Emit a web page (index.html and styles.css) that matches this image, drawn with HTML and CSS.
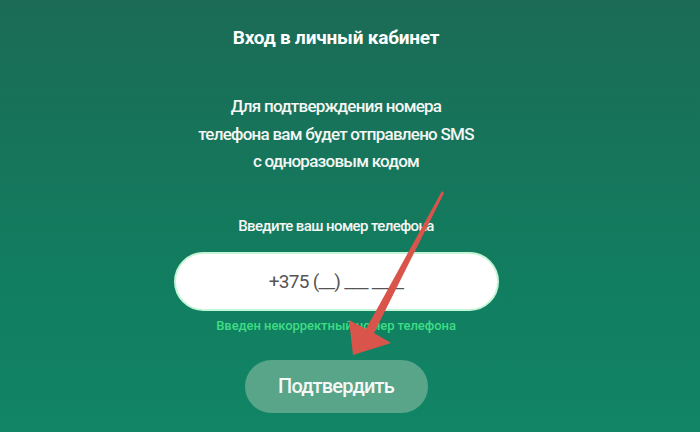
FILE: index.html
```html
<!DOCTYPE html>
<html lang="ru">
<head>
<meta charset="utf-8">
<link rel="stylesheet" href="styles.css">
</head>
<body>
<div class="page">
  <div class="content">
    <h1 class="title">Вход в личный кабинет</h1>
    <p class="intro">Для подтверждения номера<br>телефона вам будет отправлено SMS<br>с одноразовым кодом</p>
    <div class="label">Введите ваш номер телефона</div>
    <div class="phone">+375 (__) ___ ____</div>
    <div class="error">Введен некорректный номер телефона</div>
    <div class="btn">Подтвердить</div>
  </div>
  <svg class="arrow" width="700" height="432" viewBox="0 0 700 432">
    <polygon points="444,193 374,333 391,343 353,355 349,320 366,329 442,191" fill="#d9544a"/>
  </svg>
</div>
</body>
</html>
```
FILE: styles.css
```css
html, body {
  margin: 0;
  padding: 0;
}
body {
  width: 700px;
  height: 432px;
  overflow: hidden;
  background: linear-gradient(to bottom, #1b6b55 0%, #117f61 70%, #118565 100%);
  font-family: Roboto, "Noto Sans", sans-serif;
  color: #f4f6f4;
}
.page {
  position: relative;
  width: 700px;
  height: 432px;
}
.content {
  width: 672px;
  display: flex;
  flex-direction: column;
  align-items: center;
  text-align: center;
}
.title {
  margin: 26px 0 0;
  font-size: 19px;
  line-height: 24px;
  font-weight: 700;
  letter-spacing: -0.2px;
  color: #fff;
}
.intro {
  margin: 43px 0 0;
  font-size: 17px;
  line-height: 27.5px;
  font-weight: 500;
  letter-spacing: -0.75px;
}
.label {
  margin: 40px 0 0;
  font-size: 15px;
  line-height: 20px;
  font-weight: 500;
  letter-spacing: -0.6px;
}
.phone {
  margin-top: 16px;
  width: 321px;
  height: 55px;
  box-sizing: content-box;
  border: 2px solid #c4f5d6;
  border-radius: 30px;
  background: #fff;
  color: #555;
  font-size: 19px;
  letter-spacing: -0.7px;
  display: flex;
  align-items: center;
  justify-content: center;
}
.error {
  margin-top: 6px;
  font-size: 13px;
  line-height: 18px;
  font-weight: 500;
  letter-spacing: -0.05px;
  color: #3fdc85;
}
.btn {
  margin-top: 25px;
  width: 183px;
  height: 53px;
  border-radius: 27px;
  background: #58a58a;
  color: #f6f8f6;
  font-size: 20px;
  font-weight: 500;
  letter-spacing: -0.8px;
  display: flex;
  align-items: center;
  justify-content: center;
}
.arrow {
  position: absolute;
  left: 0;
  top: 0;
  pointer-events: none;
}
```
